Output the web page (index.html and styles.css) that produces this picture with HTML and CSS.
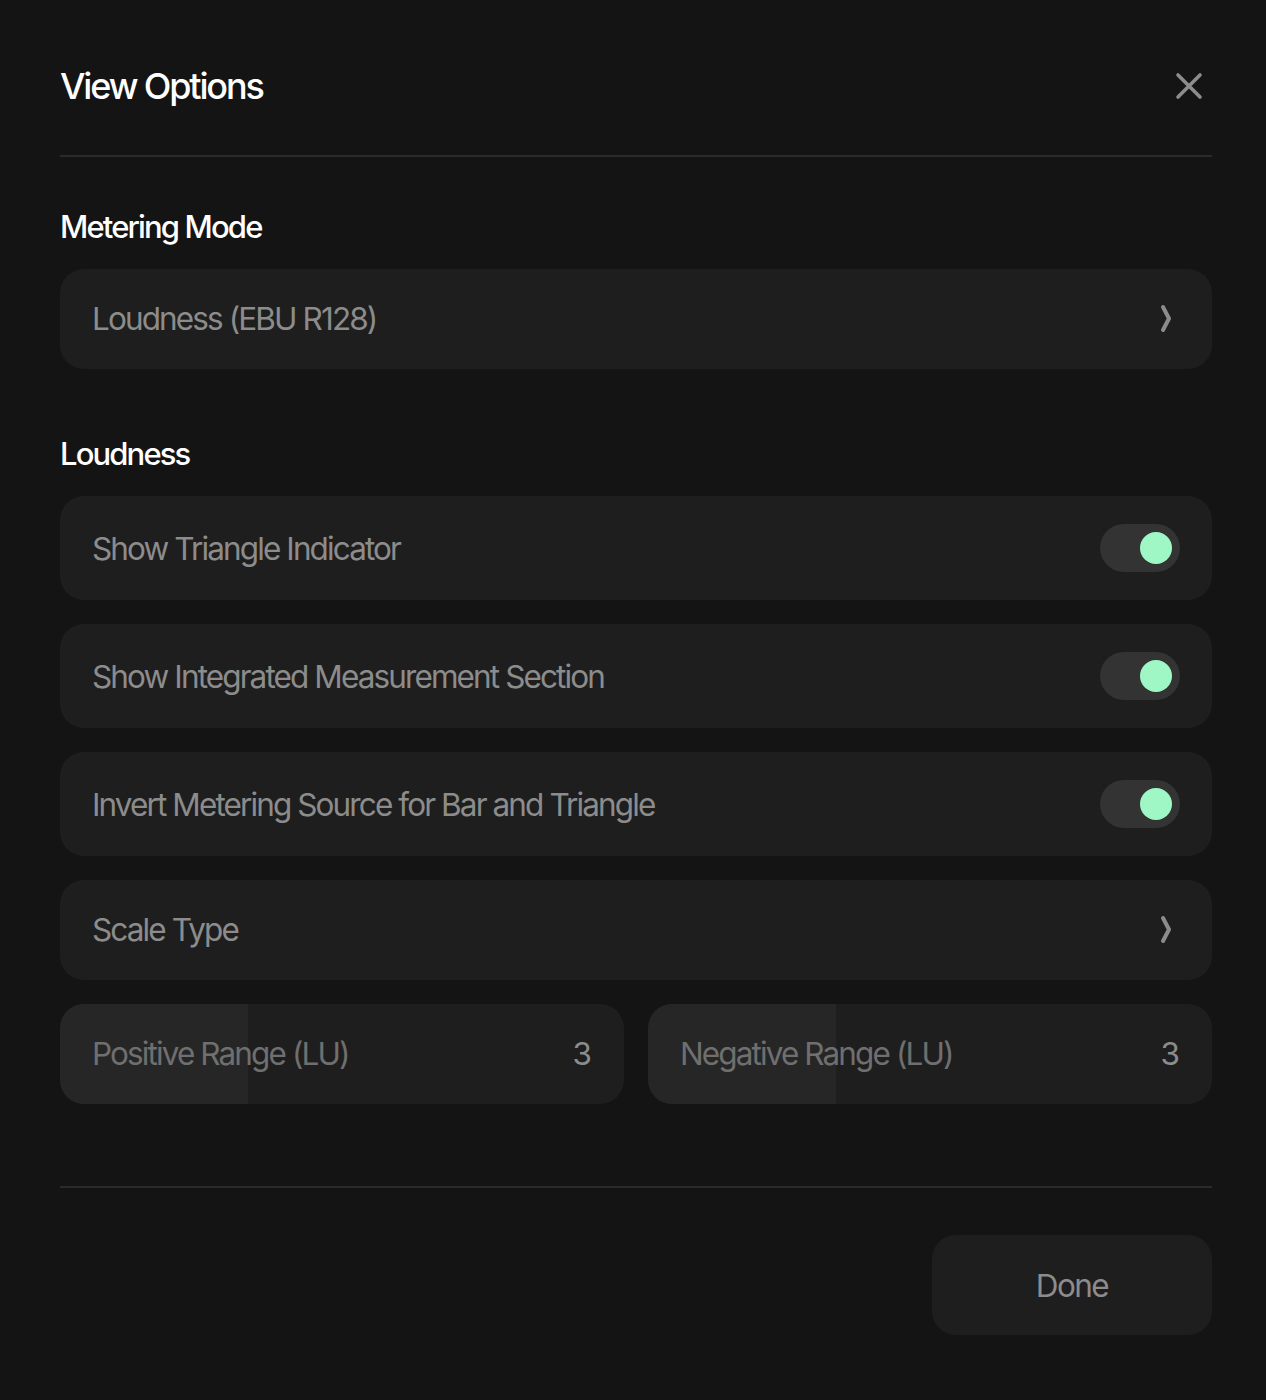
FILE: index.html
```html
<!DOCTYPE html>
<html lang="en">
<head>
<meta charset="utf-8">
<title>View Options</title>
<link rel="stylesheet" href="styles.css">
</head>
<body>
<div class="sheet">
  <header class="sheet-header">
    <h1 class="sheet-title">View Options</h1>
    <button class="close-btn" aria-label="Close">
      <svg width="28" height="28" viewBox="0 0 28 28"><path d="M3 3 L25 25 M25 3 L3 25" stroke="#8c8c8c" stroke-width="3.6" stroke-linecap="round" fill="none"/></svg>
    </button>
  </header>

  <section class="group">
    <h2 class="group-title">Metering Mode</h2>
    <div class="row row-nav">
      <span class="row-label">Loudness (EBU R128)</span>
      <svg class="chevron" width="14" height="30" viewBox="0 0 14 30"><path d="M4 4 L10 15.5 L4 27" stroke="#8c8c8c" stroke-width="4" stroke-linecap="round" stroke-linejoin="round" fill="none"/></svg>
    </div>
  </section>

  <section class="group group-loudness">
    <h2 class="group-title">Loudness</h2>
    <div class="rows">
      <div class="row row-toggle">
        <span class="row-label">Show Triangle Indicator</span>
        <span class="toggle on"><span class="knob"></span></span>
      </div>
      <div class="row row-toggle">
        <span class="row-label">Show Integrated Measurement Section</span>
        <span class="toggle on"><span class="knob"></span></span>
      </div>
      <div class="row row-toggle">
        <span class="row-label">Invert Metering Source for Bar and Triangle</span>
        <span class="toggle on"><span class="knob"></span></span>
      </div>
      <div class="row row-nav">
        <span class="row-label">Scale Type</span>
        <svg class="chevron" width="14" height="30" viewBox="0 0 14 30"><path d="M4 4 L10 15.5 L4 27" stroke="#8c8c8c" stroke-width="4" stroke-linecap="round" stroke-linejoin="round" fill="none"/></svg>
      </div>
      <div class="range-pair">
        <div class="range">
          <span class="range-fill" style="width: 33.33%"></span>
          <span class="range-label">Positive Range (LU)</span>
          <span class="range-value">3</span>
        </div>
        <div class="range">
          <span class="range-fill" style="width: 33.33%"></span>
          <span class="range-label">Negative Range (LU)</span>
          <span class="range-value">3</span>
        </div>
      </div>
    </div>
  </section>

  <footer class="sheet-footer">
    <button class="done-btn">Done</button>
  </footer>
</div>
</body>
</html>
```

FILE: styles.css
```css
* { box-sizing: border-box; }

html, body {
  margin: 0;
  padding: 0;
  background: #141414;
}

body {
  font-family: Inter, "Noto Sans", "Liberation Sans", sans-serif;
  color: #ffffff;
  -webkit-font-smoothing: antialiased;
}

.sheet {
  width: 1266px;
  min-height: 1400px;
  padding: 0 54px 0 60px;
  background: #141414;
}

.sheet-header {
  height: 157px;
  display: flex;
  align-items: center;
  justify-content: space-between;
  border-bottom: 2px solid #2a2a2a;
  padding-top: 16px;
}

.sheet-title {
  margin: 0;
  font-size: 36px;
  font-weight: 500;
  letter-spacing: -0.06em;
  line-height: 1;
}

.close-btn {
  background: none;
  border: 0;
  padding: 0;
  margin-right: 9px;
  width: 28px;
  height: 28px;
  display: flex;
  cursor: pointer;
}

.group-title {
  margin: 0;
  font-size: 31px;
  font-weight: 500;
  letter-spacing: -0.06em;
  line-height: 1;
  height: 112px;
  display: flex;
  align-items: center;
  padding-top: 26px;
}

.group-loudness .group-title {
  height: 127px;
  padding-top: 42px;
}

.rows {
  display: flex;
  flex-direction: column;
  gap: 24px;
}

.row {
  background: #1e1e1e;
  border-radius: 24px;
  display: flex;
  align-items: center;
  justify-content: space-between;
  padding: 0 32px 2px;
  height: 100px;
}

.row-toggle {
  height: 104px;
  padding-bottom: 0;
}

.row-label {
  font-size: 31.5px;
  font-weight: 400;
  letter-spacing: -0.06em;
  color: #8c8c8c;
}

.chevron {
  margin-right: 7px;
}

.toggle {
  width: 80px;
  height: 48px;
  border-radius: 24px;
  background: #333333;
  display: flex;
  align-items: center;
  justify-content: flex-end;
  padding: 0 8px;
}

.toggle .knob {
  width: 32px;
  height: 32px;
  border-radius: 50%;
  background: #a0f7c6;
}

.range-pair {
  display: grid;
  grid-template-columns: 1fr 1fr;
  gap: 24px;
}

.range {
  position: relative;
  height: 100px;
  border-radius: 24px;
  background: #1e1e1e;
  overflow: hidden;
  display: flex;
  align-items: center;
  justify-content: space-between;
  padding: 0 32px 2px;
}

.range-fill {
  position: absolute;
  left: 0;
  top: 0;
  bottom: 0;
  background: #262626;
}

.range-label,
.range-value {
  position: relative;
  font-size: 31.5px;
  font-weight: 400;
  letter-spacing: -0.06em;
}

.range-label { color: #6f6f6f; }
.range-value { color: #8c8c8c; letter-spacing: 0; }

.sheet-footer {
  margin-top: 82px;
  border-top: 2px solid #2a2a2a;
  padding-top: 47px;
  display: flex;
  justify-content: flex-end;
}

.done-btn {
  width: 280px;
  height: 100px;
  border: 0;
  border-radius: 24px;
  background: #1e1e1e;
  color: #8c8c8c;
  font-family: inherit;
  font-size: 31.5px;
  font-weight: 400;
  letter-spacing: -0.05em;
  cursor: pointer;
}
```
